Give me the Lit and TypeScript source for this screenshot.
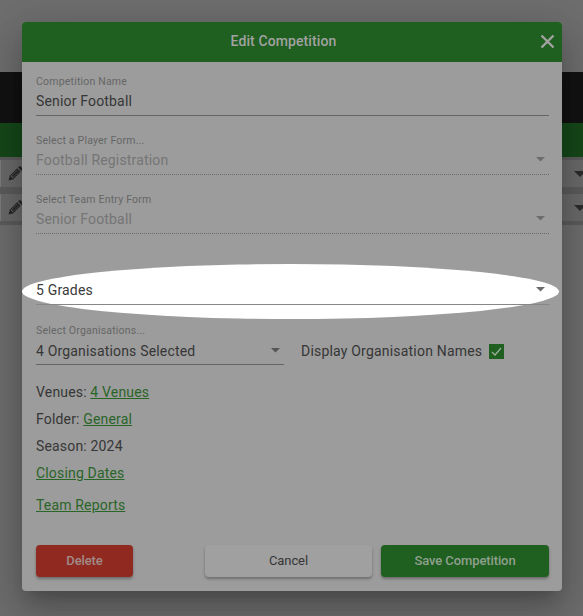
import { LitElement, html, css } from "lit";
import { customElement } from "lit/decorators.js";

const caret = html`<svg class="caret" width="9" height="4.5" viewBox="0 0 10 5"><path d="M0 0h10L5 5z"/></svg>`;
const pencil = html`<svg class="pencil" width="15" height="15" viewBox="0 0 16 16"><path d="M0.6 15.4l1.3-5 7.9-7.9 3.7 3.7-7.9 7.9z M2.9 11l2.1 2.1 7-7-2.1-2.1z" fill-rule="evenodd"/><path d="M4 10.6l6.4-6.4 1.4 1.4-6.4 6.4z"/><path d="M10.8 1.5l1-1a1.2 1.2 0 0 1 1.7 0l2 2a1.2 1.2 0 0 1 0 1.7l-1 1z"/></svg>`;

@customElement("app-root")
export class AppRoot extends LitElement {
  static styles = css`
    :host { display: block; width: 583px; height: 616px; overflow: hidden; position: relative; background: #6e6e6e; font-family: Roboto, "Liberation Sans", sans-serif; }
    .page-top { height: 72px; }
    .page-black { height: 51px; background: #121212; }
    .page-green { height: 34px; background: #16481a; }
    .page-row { height: 34px; box-sizing: border-box; border-top: 3px solid #5c5c5c; border-bottom: 4px solid #5c5c5c; display: flex; align-items: center; justify-content: space-between; color: #2c2c2c; background: #6a6a6a; }
    .cell { width: 1px; height: 100%; background: #7c7c7c; margin-right: 7px; flex: none; }
    .page-row .pencil { fill: #262626; flex: none; margin-top: -1px; }
    .page-row .dn { width: 0; height: 0; border: 6px solid transparent; border-top-color: #2c2c2c; border-bottom: 0; margin: 0 -3px 0 auto; }
    .modal { position: absolute; left: 22px; top: 22px; width: 540px; height: 569px; box-sizing: border-box; background: #9c9c9c; border-radius: 4px; box-shadow: 0 11px 15px -7px rgba(0,0,0,.2), 0 24px 38px 3px rgba(0,0,0,.14), 0 9px 46px 8px rgba(0,0,0,.12); display: flex; flex-direction: column; }
    .head { height: 40px; flex: none; box-sizing: border-box; padding: 0 17px 2px 0; background: #1f5f1f; color: #a2a2a2; font-size: 14px; font-weight: 500; display: flex; align-items: center; justify-content: center; border-radius: 4px 4px 0 0; position: relative; letter-spacing: .1px; }
    .close { position: absolute; right: 7px; top: 12px; }
    .body { flex: 1; padding: 13px 13px 14px 14px; display: flex; flex-direction: column; font-size: 14px; color: #363636; letter-spacing: .17px; }
    .field { height: 41px; flex: none; box-sizing: border-box; position: relative; border-bottom: 1px solid #656565; margin-bottom: 18px; }
    .label { font-size: 10.5px; line-height: 13px; height: 13px; color: #666; letter-spacing: .2px; }
    .value { height: 27px; box-sizing: border-box; padding: 0 4px 2px 0; display: flex; align-items: center; justify-content: space-between; }
    .caret { fill: #6c6c6c; }
    .org .caret { fill: #555; }
    .org .value { padding-bottom: 0; }
    .field.disabled { border-bottom: 1px dotted #6c6c6c; }
    .field.disabled .value { color: #757575; }
    .field.grades { margin-top: 12px; border-bottom-color: #878787; }
    .ellipse { position: absolute; left: -14px; top: 0; width: 537px; height: 55px; border-radius: 50%; background: #fff; z-index: 0; }
    .grades .value { position: relative; z-index: 1; margin-top: 13px; color: #3a3a3a; }
    .grades-line { position: absolute; left: 0; right: 0; bottom: -1px; height: 1px; background: #878787; z-index: 1; }
    .org-row { display: flex; align-items: flex-start; gap: 17px; margin-top: 1px; }
    .org-row .field { width: 248px; margin-bottom: 0; }
    .check { display: flex; align-items: center; gap: 7px; height: 27px; margin-top: 13px; letter-spacing: .2px; }
    .box { width: 15px; height: 15px; background: #1f5f1f; display: flex; align-items: center; justify-content: center; margin-top: 2px; }
    .lines { margin-top: 17px; display: flex; flex-direction: column; gap: 7px; }
    .lines div { height: 20px; line-height: 20px; }
    a { color: #2a6528; text-decoration: underline; }
    .lines .gap { margin-top: 5px; }
    .actions { margin-top: auto; display: flex; align-items: flex-start; }
    .btn { height: 32px; box-sizing: border-box; padding-bottom: 1px; border-radius: 4px; display: flex; align-items: center; justify-content: center; font-size: 13px; font-weight: 500; box-shadow: 0 2px 3px rgba(0,0,0,.3); letter-spacing: -.1px; }
    .del { width: 97px; background: #902a20; color: #a08a88; margin-right: 72px; }
    .cancel { width: 167px; background: #a0a0a0; color: #363636; font-weight: 400; margin-right: 9px; }
    .save { width: 168px; background: #1f5f1f; color: #8fa08f; }
  `;

  render() {
    return html`
      <div class="page-top"></div>
      <div class="page-black"></div>
      <div class="page-green"></div>
      <div class="page-row"><span class="cell"></span>${pencil}<span class="dn"></span></div>
      <div class="page-row"><span class="cell"></span>${pencil}<span class="dn"></span></div>
      <div class="modal">
        <div class="head">Edit Competition
          <svg class="close" width="15" height="15" viewBox="0 0 15 15"><path d="M1.5 1.5l12 12M13.5 1.5l-12 12" stroke="#a2a2a2" stroke-width="2.4" fill="none"/></svg>
        </div>
        <div class="body">
          <div class="field"><div class="label">Competition Name</div><div class="value">Senior Football</div></div>
          <div class="field disabled"><div class="label">Select a Player Form...</div><div class="value">Football Registration ${caret}</div></div>
          <div class="field disabled"><div class="label">Select Team Entry Form</div><div class="value">Senior Football ${caret}</div></div>
          <div class="field grades">
            <div class="ellipse"></div>
            <div class="value">5 Grades ${caret}</div>
            <div class="grades-line"></div>
          </div>
          <div class="org-row">
            <div class="field org"><div class="label">Select Organisations...</div><div class="value">4 Organisations Selected ${caret}</div></div>
            <div class="check">Display Organisation Names
              <span class="box"><svg width="11" height="9" viewBox="0 0 11 9"><path d="M1 5l3 3 6-7" stroke="#9cb09c" stroke-width="1.2" fill="none"/></svg></span>
            </div>
          </div>
          <div class="lines">
            <div>Venues: <a>4 Venues</a></div>
            <div>Folder: <a>General</a></div>
            <div>Season: 2024</div>
            <div><a>Closing Dates</a></div>
            <div class="gap"><a>Team Reports</a></div>
          </div>
          <div class="actions">
            <div class="btn del">Delete</div>
            <div class="btn cancel">Cancel</div>
            <div class="btn save">Save Competition</div>
          </div>
        </div>
      </div>`;
  }
}
